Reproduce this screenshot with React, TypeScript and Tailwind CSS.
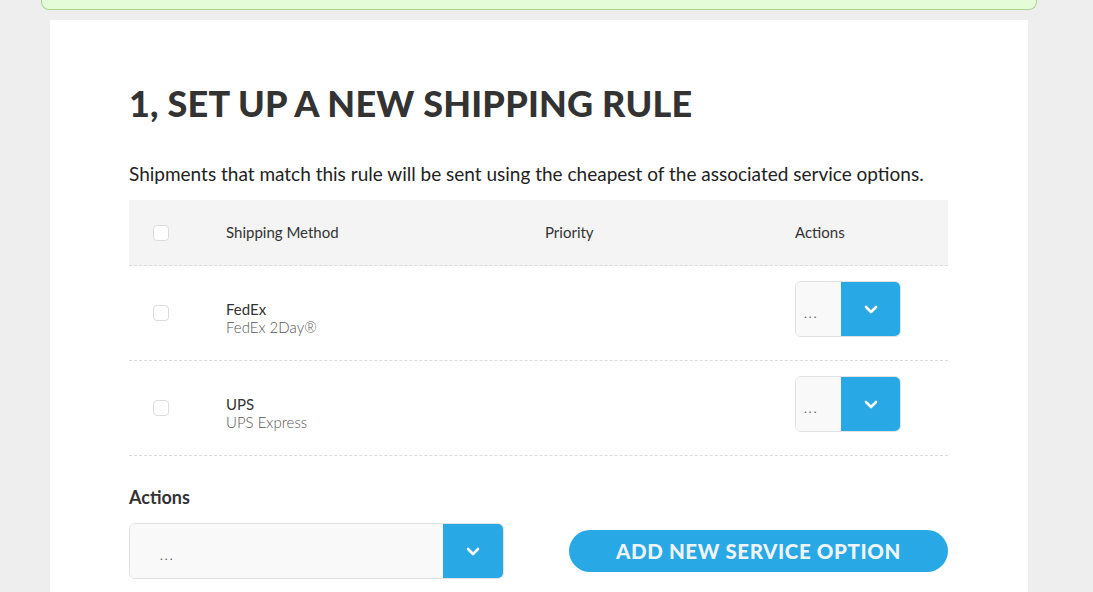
import React from 'react';

const font = { fontFamily: '"Lato", "Open Sans", sans-serif' };

const Chevron = () => (
  <svg width="14" height="9" viewBox="0 0 14 9" fill="none">
    <path d="M2 2l5 5 5-5" stroke="white" strokeWidth="2.6" strokeLinecap="round" strokeLinejoin="round" />
  </svg>
);

const Check = () => <div className="w-4 h-4 rounded-[4px] border border-[#dcdcdc] bg-white" />;

const SmallSelect = () => (
  <div className="flex w-[106px] h-[56px] mb-[8px] rounded-[6px] border border-[#e2e2e2] overflow-hidden">
    <div className="w-[45px] bg-[#f9f9f9] flex items-center pl-[8px] pt-[10px] text-[12px] text-[#555] tracking-[2px]">...</div>
    <div className="flex-1 bg-[#29a8e6] flex items-center justify-center">
      <Chevron />
    </div>
  </div>
);

const rows = [
  { name: 'FedEx', service: 'FedEx 2Day®' },
  { name: 'UPS', service: 'UPS Express' },
];

export default function App() {
  return (
    <div className="min-h-screen bg-[#eeeeee] overflow-hidden" style={font}>
      <div className="ml-[41px] w-[996px] h-[10px] bg-[#e5fcd8] border border-t-0 border-[#a9d48f] rounded-b-[8px]" />
      <div className="ml-[50px] w-[978px] mt-[10px] bg-white pl-[79px] pr-[80px] pt-[62px] pb-[20px]">
        <h1 className="text-[36px] leading-[43px] font-black text-[#333] tracking-[0.2px]">1, SET UP A NEW SHIPPING RULE</h1>
        <p className="mt-[37px] text-[19px] leading-[24px] text-[#222]">
          Shipments that match this rule will be sent using the cheapest of the associated service options.
        </p>
        <div className="mt-[14px]">
          <div className="flex items-center h-[66px] bg-[#f4f4f4] border-b border-dashed border-[#dcdcdc] text-[15px] text-[#333]">
            <div className="w-[97px] pl-[24px]"><Check /></div>
            <div className="w-[319px]">Shipping Method</div>
            <div className="w-[250px]">Priority</div>
            <div>Actions</div>
          </div>
          {rows.map((r) => (
            <div key={r.name} className="flex items-center h-[95px] border-b border-dashed border-[#dcdcdc]">
              <div className="w-[97px] pl-[24px]"><Check /></div>
              <div className="w-[319px] leading-[18px] pt-[10px]">
                <div className="text-[15px] text-[#333] font-normal">{r.name}</div>
                <div className="text-[15px] text-[#555] font-light">{r.service}</div>
              </div>
              <div className="w-[250px]" />
              <SmallSelect />
            </div>
          ))}
        </div>
        <div className="mt-[28px] text-[18px] font-bold text-[#333]">Actions</div>
        <div className="mt-[12px] flex items-center justify-between">
          <div className="flex w-[375px] h-[56px] rounded-[6px] border border-[#e2e2e2] overflow-hidden">
            <div className="flex-1 bg-[#f9f9f9] flex items-center pl-[30px] pt-[10px] text-[12px] text-[#555] tracking-[2px]">...</div>
            <div className="w-[60px] bg-[#29a8e6] flex items-center justify-center">
              <Chevron />
            </div>
          </div>
          <button className="w-[379px] h-[42px] rounded-full bg-[#29a8e6] text-[#eef4f8] text-[20.5px] font-black tracking-[0.6px]">
            ADD NEW SERVICE OPTION
          </button>
        </div>
      </div>
    </div>
  );
}
